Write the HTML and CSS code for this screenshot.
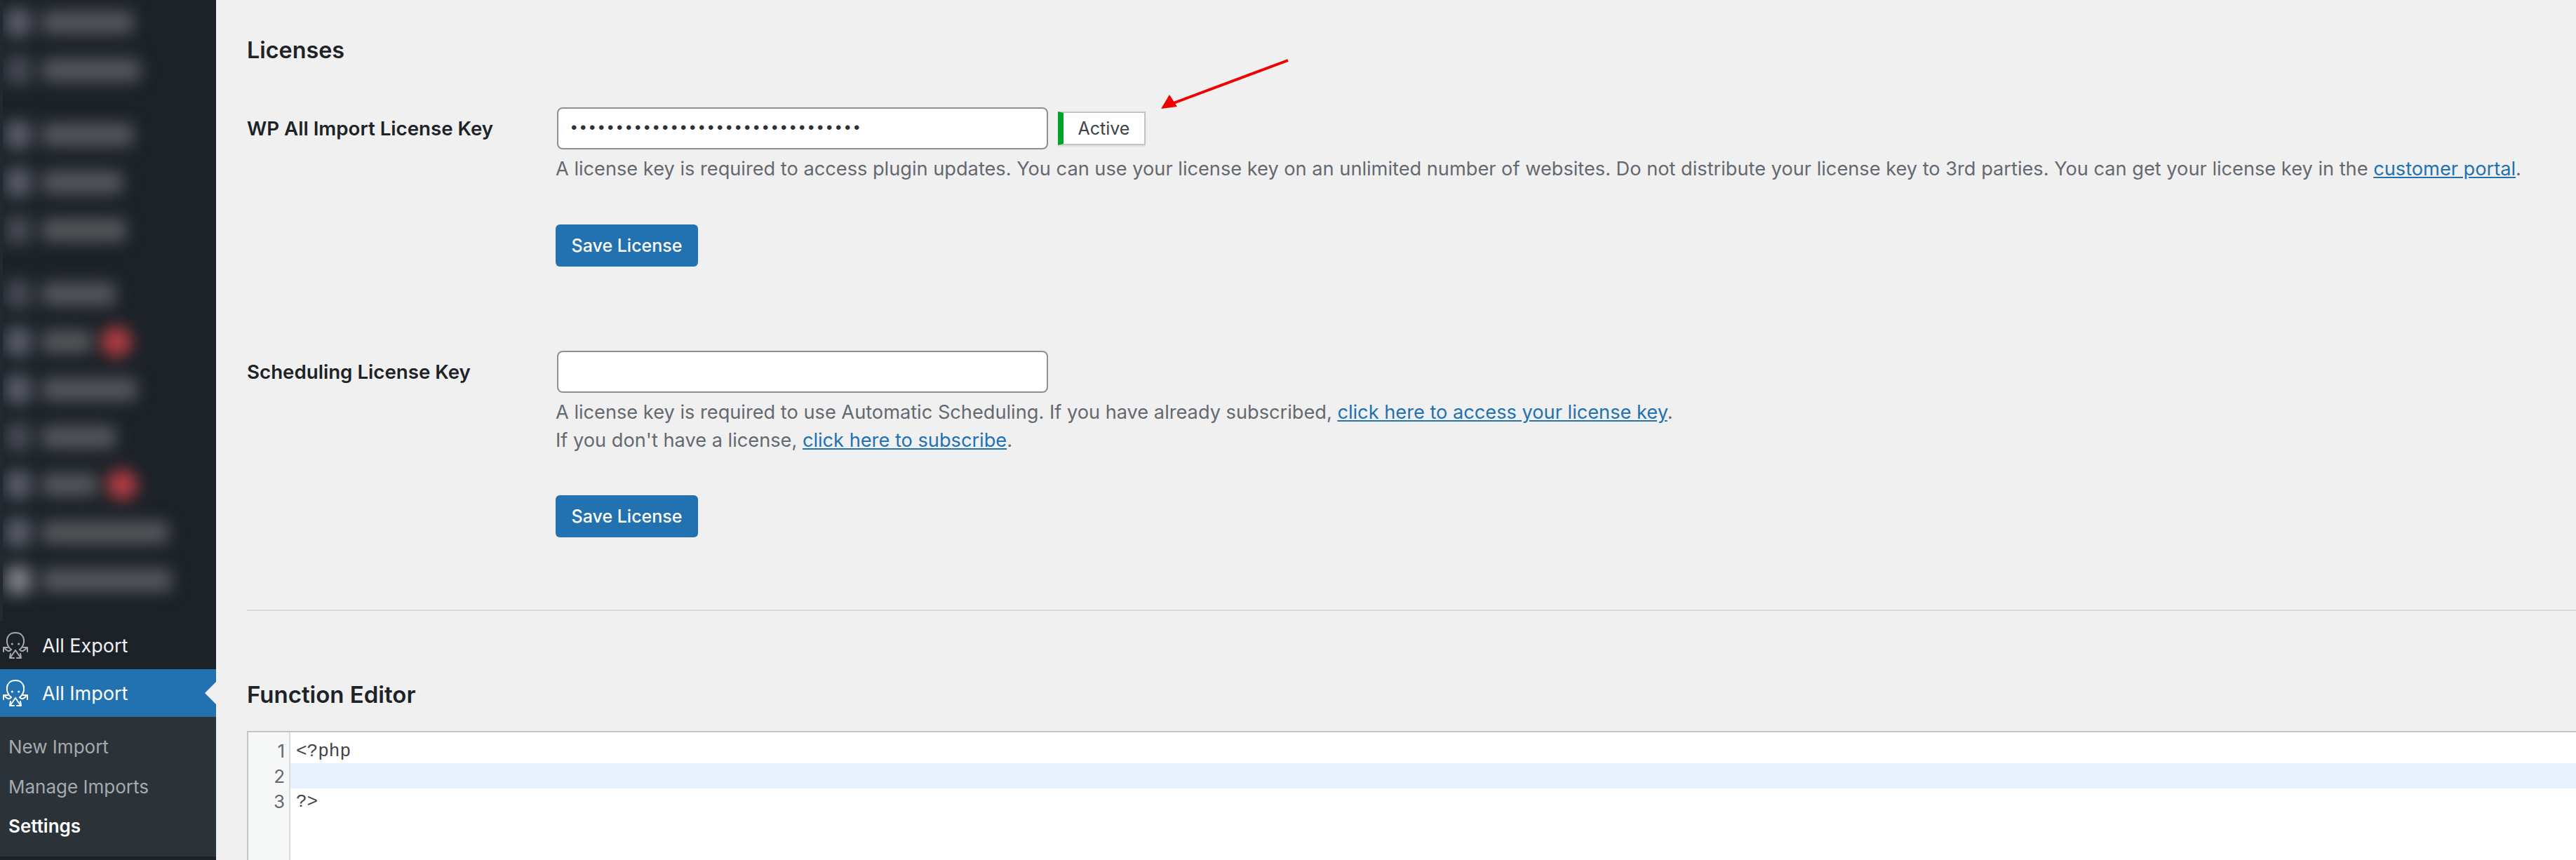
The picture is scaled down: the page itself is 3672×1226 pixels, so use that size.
FILE: index.html
```html
<!DOCTYPE html>
<html lang="en">
<head>
<meta charset="utf-8">
<title>Settings - All Import</title>
<link rel="stylesheet" href="styles.css">
</head>
<body>
<div class="shell">
  <nav class="sidebar">
    <div class="blur-menu">
      <div class="blur-inner">
        <div class="blur-group">
          <div class="blur-row"><i class="dot"></i><i class="bar w1"></i></div>
          <div class="blur-row"><i class="dot dim"></i><i class="bar w2"></i></div>
        </div>
        <div class="blur-group">
          <div class="blur-row"><i class="dot"></i><i class="bar w1"></i></div>
          <div class="blur-row"><i class="dot"></i><i class="bar w4"></i></div>
          <div class="blur-row"><i class="dot dim"></i><i class="bar w5"></i></div>
        </div>
        <div class="blur-group">
          <div class="blur-row"><i class="dot dim"></i><i class="bar w6"></i></div>
          <div class="blur-row"><i class="dot"></i><i class="bar w7"></i><i class="badge"></i></div>
          <div class="blur-row"><i class="dot"></i><i class="bar w8"></i></div>
          <div class="blur-row"><i class="dot dim"></i><i class="bar w9"></i></div>
          <div class="blur-row"><i class="dot"></i><i class="bar w10"></i><i class="badge"></i></div>
          <div class="blur-row"><i class="dot"></i><i class="bar w11"></i></div>
          <div class="blur-row"><i class="dot light"></i><i class="bar w12"></i></div>
        </div>
      </div>
    </div>
    <a class="menu-item">
      <svg class="octo" viewBox="0 0 36 38"><use href="#octopus"/></svg>
      <span>All Export</span>
    </a>
    <a class="menu-item current">
      <svg class="octo" viewBox="0 0 36 38"><use href="#octopus"/></svg>
      <span>All Import</span>
    </a>
    <ul class="submenu">
      <li>New Import</li>
      <li>Manage Imports</li>
      <li class="active">Settings</li>
    </ul>
  </nav>
  <main class="content">
    <h2 class="title">Licenses</h2>
    <section class="field field-first">
      <div class="label">WP All Import License Key</div>
      <div class="control">
        <div class="input-line">
          <div class="input">••••••••••••••••••••••••••••••••</div>
          <div class="status">Active</div>
          <svg class="arrow" viewBox="0 0 190 76"><path class="arrow-line" d="M186 3 L20 65"/><path class="arrow-head" d="M5 72 L17 52 L28 69 Z"/></svg>
        </div>
        <p class="desc">A license key is required to access plugin updates. You can use your license key on an unlimited number of websites. Do not distribute your license key to 3rd parties. You can get your license key in the <a>customer portal</a>.</p>
        <button class="save">Save License</button>
      </div>
    </section>
    <section class="field field-second">
      <div class="label">Scheduling License Key</div>
      <div class="control">
        <div class="input-line"><div class="input"></div></div>
        <p class="desc">A license key is required to use Automatic Scheduling. If you have already subscribed, <a>click here to access your license key</a>.<br>If you don't have a license, <a>click here to subscribe</a>.</p>
        <button class="save">Save License</button>
      </div>
    </section>
    <hr class="rule">
    <h2 class="title title-editor">Function Editor</h2>
    <div class="editor">
      <div class="gutter"><div>1</div><div>2</div><div>3</div></div>
      <div class="code">
        <div class="code-line">&lt;?php</div>
        <div class="code-line current-line"></div>
        <div class="code-line">?&gt;</div>
      </div>
    </div>
  </main>
</div>
<svg class="defs" width="0" height="0">
  <symbol id="octopus" viewBox="0 0 36 38">
    <g fill="none" stroke="currentColor" stroke-width="2" stroke-linecap="round" stroke-linejoin="round">
      <path d="M12 25 C3 19 3 1 18 1 C33 1 33 19 24 25"/>
      <path d="M12 25 C9 29 5 27 2 22"/>
      <path d="M1 28 L1 22 L7 22"/>
      <path d="M24 25 C27 29 31 27 34 22"/>
      <path d="M35 28 L35 22 L29 22"/>
      <path d="M18 26 L11 36"/>
      <path d="M11 31 L10 37 L16 37"/>
      <path d="M18 26 L25 36"/>
      <path d="M25 31 L26 37 L20 37"/>
    </g>
    <circle cx="13.3" cy="17" r="1.6" fill="currentColor"/>
    <circle cx="22.7" cy="17" r="1.6" fill="currentColor"/>
  </symbol>
</svg>
</body>
</html>
```
FILE: styles.css
```css
html, body { margin: 0; padding: 0; height: 100%; overflow: hidden; background: #f0f0f1; }
body { font-family: Inter, "Liberation Sans", sans-serif; color: #1d2327; }
.defs { display: none; }
.shell { display: flex; height: 1226px; }

.sidebar { width: 308px; flex: none; background: #1d2229; overflow: hidden; display: flex; flex-direction: column; }
.blur-menu { height: 886px; flex: none; box-sizing: border-box; border-left: 4px solid #232930; overflow: hidden; }
.blur-inner { margin-top: -2px; padding-left: 4px; filter: blur(11px); }
.blur-group { margin-bottom: 23.5px; }
.blur-row { display: flex; align-items: center; height: 68px; }
.dot { width: 36px; height: 40px; flex: none; background: #5a5d66; border-radius: 8px; }
.dot.dim { background: #474a52; }
.dot.light { background: #7d8084; }
.bar { height: 32px; margin-left: 16px; background: #54585b; border-radius: 6px; }
.w1 { width: 130px; }
.w2 { width: 140px; }
.w4 { width: 115px; }
.w5 { width: 120px; }
.w6 { width: 105px; }
.w7 { width: 70px; }
.w8 { width: 135px; }
.w9 { width: 105px; }
.w10 { width: 78px; }
.w11 { width: 180px; }
.w12 { width: 185px; }
.badge { width: 44px; height: 44px; flex: none; margin-left: 14px; border-radius: 50%; background: #b03c42; }

.menu-item { position: relative; display: flex; align-items: center; height: 68px; flex: none; padding-left: 4px; gap: 20px; font-size: 27px; color: #f0f0f1; }
.menu-item.current { background: #2271b1; color: #fff; }
.menu-item.current::after { content: ""; position: absolute; right: 0; top: 50%; margin-top: -16px; border: 16px solid transparent; border-right-color: #f0f0f1; border-left-width: 0; }
.octo { width: 36px; height: 38px; flex: none; color: #a7aaad; }
.current .octo { color: #fff; }
.submenu { list-style: none; margin: 0; padding: 15px 0 15px 12px; height: 199px; flex: none; box-sizing: border-box; background: #2c3338; color: #a7aaad; font-size: 26px; }
.submenu li { height: 56.5px; line-height: 56px; }
.submenu .active { color: #fff; font-weight: 600; }

.content { flex: 1; min-width: 0; padding-left: 44px; font-size: 27.2px; display: flex; flex-direction: column; }
.title { margin: 0; font-size: 32.3px; line-height: 40px; font-weight: 600; padding-top: 52px; }
.field { display: flex; }
.field-first { padding-top: 61px; }
.field-second { padding-top: 120px; }
.label { width: 440px; flex: none; font-weight: 600; font-size: 27.7px; line-height: 60px; }
.control { flex: 1; min-width: 0; }
.input-line { position: relative; display: flex; align-items: center; height: 60px; }
.input { width: 700px; height: 60px; margin-left: 2px; box-sizing: border-box; border: 2px solid #8c8f94; border-radius: 8px; background: #fff; padding-left: 18px; line-height: 54px; font-size: 24px; letter-spacing: 4.6px; color: #2c3338; font-family: "Liberation Sans", sans-serif; white-space: nowrap; overflow: hidden; }
.status { margin-left: 14px; width: 125px; height: 48px; box-sizing: border-box; border: 2px solid #c3c4c7; border-left: 8px solid #00a32a; background: #fff; box-shadow: 0 2px 2px rgba(0,0,0,.08); text-align: center; line-height: 44px; font-size: 25px; color: #3c434a; }
.arrow { position: absolute; left: 858px; top: -70px; width: 190px; height: 76px; overflow: visible; }
.arrow-line { stroke: #f00000; stroke-width: 4; fill: none; }
.arrow-head { fill: #f00000; }
.desc { margin: 8px 0 0; font-size: 27.2px; line-height: 40px; color: #646970; white-space: nowrap; }
.desc a { color: #2271b1; text-decoration: underline; }
.save { display: block; margin-top: 59px; width: 203px; height: 60px; border: none; border-radius: 6px; background: #2271b1; color: #fff; font-family: Inter, "Liberation Sans", sans-serif; font-size: 25px; font-weight: 500; padding: 0; }
.field-second .save { margin-top: 58px; }
.rule { border: none; border-top: 2px solid #dcdcde; margin: 103px 0 0; flex: none; }
.title-editor { font-size: 33px; padding-top: 99px; }
.editor { display: flex; flex: 1; margin-top: 32px; background: #fff; border: 2px solid #c3c4c7; border-right: none; border-bottom: none; box-sizing: border-box; }
.gutter { width: 60px; flex: none; box-sizing: border-box; background: #f6f7f7; border-right: 2px solid #dcdcde; padding: 8px 6px 0 0; text-align: right; color: #646970; font-size: 26px; }
.gutter div { height: 36px; line-height: 38px; }
.code { flex: 1; padding-top: 8px; font-family: "Liberation Mono", monospace; font-size: 26px; color: #444; }
.code-line { height: 36px; line-height: 38px; padding-left: 8px; }
.current-line { background: #e8f2fe; }
```
